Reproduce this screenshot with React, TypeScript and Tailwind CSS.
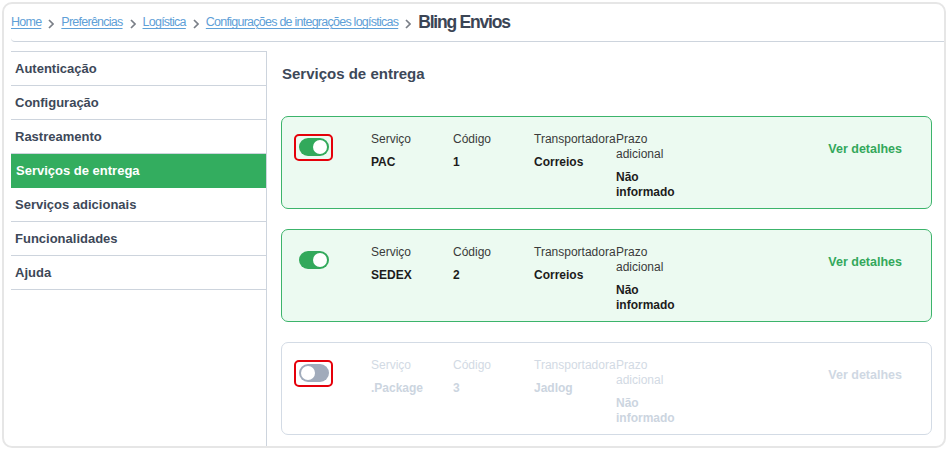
import React from "react";

const crumbs = ["Home", "Preferências", "Logística", "Configurações de integrações logísticas"];

const menu = [
  "Autenticação",
  "Configuração",
  "Rastreamento",
  "Serviços de entrega",
  "Serviços adicionais",
  "Funcionalidades",
  "Ajuda",
];

const services = [
  { on: true, marked: true, servico: "PAC", codigo: "1", transp: "Correios" },
  { on: true, marked: false, servico: "SEDEX", codigo: "2", transp: "Correios" },
  { on: false, marked: true, servico: ".Package", codigo: "3", transp: "Jadlog" },
];

function Chevron() {
  return (
    <svg width="6" height="10" viewBox="0 0 6 10" className="ml-[7px] mr-[7px] mt-[2px] shrink-0">
      <polyline points="1,1 5,5 1,9" fill="none" stroke="#7a7f87" strokeWidth="1.7" />
    </svg>
  );
}

function Toggle({ on, marked }: { on: boolean; marked: boolean }) {
  return (
    <div className="relative mt-[6px] h-[18px] w-[30px]">
      <div
        className={
          on
            ? "flex h-[18px] w-[30px] items-center justify-end rounded-full bg-[#32a95b] px-[2px]"
            : "flex h-[18px] w-[30px] items-center justify-start rounded-full bg-[#a1abbb] px-[2px]"
        }
      >
        <div className="h-[14px] w-[14px] rounded-full bg-white" />
      </div>
      {marked && (
        <div className="absolute -top-[4px] -bottom-[5px] -left-[5px] -right-[4px] rounded-[5px] border-2 border-[#e5000a]" />
      )}
    </div>
  );
}

function ServiceCard({ s }: { s: (typeof services)[number] }) {
  const label = s.on ? "text-[#3a3a3a]" : "text-[#d2dae4]";
  const value = s.on ? "text-[#1c1c1c]" : "text-[#ccd5df]";
  const cols = [
    { t: "Serviço", v: s.servico, w: "w-[82px]" },
    { t: "Código", v: s.codigo, w: "w-[81px]" },
    { t: "Transportadora", v: s.transp, w: "w-[82px]" },
    { t: "Prazo adicional", v: "Não informado", w: "w-[81px]" },
  ];
  return (
    <div
      className={
        s.on
          ? "flex items-start rounded-[7px] border border-[#3cb46b] bg-[#ecfaf1] pt-[15px] pb-[8px] pl-[17px] pr-[29px]"
          : "flex items-start rounded-[7px] border border-[#d3dbe5] bg-white pt-[15px] pb-[8px] pl-[17px] pr-[29px]"
      }
    >
      <div className="w-[72px] shrink-0">
        <Toggle on={s.on} marked={s.marked} />
      </div>
      {cols.map((c) => (
        <div key={c.t} className={`${c.w} shrink-0 text-[12px] leading-[15px]`}>
          <div className={label}>
            {c.t === "Transportadora" ? <span className="whitespace-nowrap">{c.t}</span> : c.t}
          </div>
          <div className={`${value} mt-[8px] font-bold`}>{c.v}</div>
        </div>
      ))}
      <div
        className={
          s.on
            ? "ml-auto mt-[10px] text-[12.5px] leading-[15px] font-bold text-[#33a85b]"
            : "ml-auto mt-[10px] text-[12.5px] leading-[15px] font-bold text-[#cfd8e3]"
        }
      >
        Ver detalhes
      </div>
    </div>
  );
}

export default function App() {
  return (
    <div
      className="h-[450px] w-[948px] bg-white p-[2px]"
      style={{ fontFamily: '"Liberation Sans", Arial, sans-serif' }}
    >
      <div className="flex h-full flex-col rounded-[10px] border-2 border-[#e6e6e6] pl-[7px]">
        {/* Breadcrumb */}
        <div className="flex h-[38px] shrink-0 items-center rounded-bl-[4px] border-b border-[#cdd4dd]">
          {crumbs.map((c) => (
            <React.Fragment key={c}>
              <a className="text-[12.5px] tracking-[-0.75px] text-[#5ea0d7] underline underline-offset-2 decoration-[1px]">
                {c}
              </a>
              <Chevron />
            </React.Fragment>
          ))}
          <span className="text-[17.5px] font-bold tracking-[-1.2px] text-[#3b4555]">Bling Envios</span>
        </div>

        {/* Body */}
        <div className="flex flex-1 pt-[9px]">
          <aside className="w-[256px] shrink-0 border-r border-[#cdd4dd]">
            <ul className="border-t border-[#cdd4dd]">
              {menu.map((m) => (
                <li
                  key={m}
                  className={
                    m === "Serviços de entrega"
                      ? "flex h-[34px] items-center border-b border-[#33ad5f] bg-[#33ad5f] pl-[5px] text-[13px] font-bold text-white"
                      : "flex h-[34px] items-center border-b border-[#cdd4dd] pl-[4px] text-[13px] font-bold text-[#3d4858]"
                  }
                >
                  {m}
                </li>
              ))}
            </ul>
          </aside>

          <main className="flex-1 pt-[14px] pl-[14px] pr-[12px]">
            <h2 className="pl-[1px] text-[15px] leading-[17px] font-bold text-[#3d4858]">Serviços de entrega</h2>
            <div className="mt-[34px] flex flex-col gap-[20px]">
              {services.map((s) => (
                <ServiceCard key={s.servico} s={s} />
              ))}
            </div>
          </main>
        </div>
      </div>
    </div>
  );
}
